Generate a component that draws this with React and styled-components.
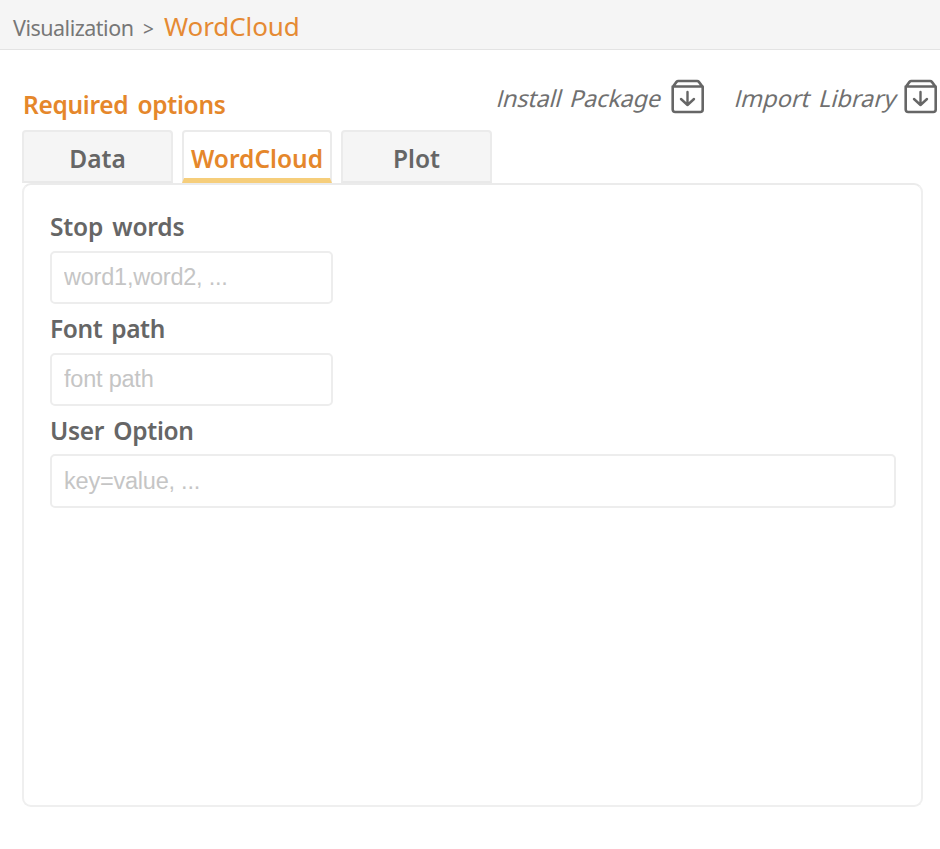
import React from 'react';
import styled, { createGlobalStyle } from 'styled-components';

const GlobalStyle = createGlobalStyle`
  *, *::before, *::after { box-sizing: border-box; }
  body { margin: 0; background: #fff; }
`;

const Page = styled.div`
  width: 940px;
  height: 849px;
  overflow: hidden;
  background: #fff;
  color: #5f5f5f;
  font-family: 'Noto Sans', 'Open Sans', sans-serif;
`;

const Header = styled.header`
  display: flex;
  align-items: baseline;
  height: 50px;
  padding: 2px 0 0 13px;
  background: #f5f5f5;
  border-bottom: 1px solid #e3e3e3;
  white-space: nowrap;
`;

const Crumb = styled.span`
  width: 130px;
  font-size: 21.5px;
  letter-spacing: -0.5px;
  color: #777;
`;

const Separator = styled.span`
  width: 21px;
  font-size: 19px;
  color: #777;
`;

const Current = styled.span`
  font-size: 26px;
  line-height: 48px;
  letter-spacing: -0.1px;
  color: #e58a33;
`;

const Toolbar = styled.div`
  display: flex;
  height: 80px;
  padding-left: 23px;
  white-space: nowrap;
`;

const Heading = styled.h1`
  flex: none;
  width: 474px;
  margin: 0;
  padding-top: 35px;
  font-size: 24.5px;
  line-height: 40px;
  font-weight: 600;
  letter-spacing: -0.3px;
  word-spacing: 3px;
  color: #e5872b;
`;

const Action = styled.button`
  display: flex;
  align-items: center;
  justify-content: space-between;
  width: ${(p) => p.$width}px;
  height: 35px;
  margin: 29px 30px 0 0;
  padding: 0;
  border: 0;
  background: none;
  color: #707070;
  font: 400 23.5px/36px 'Noto Sans', sans-serif;
  flex: none;
`;

const ActionText = styled.span`
  padding: 3px 0 0 1px;
  transform: skewX(-15deg);
  letter-spacing: ${(p) => p.$tracking}px;
  word-spacing: 3px;
  &::first-letter { font-family: 'Open Sans', sans-serif; }
`;

const Tabs = styled.nav`
  display: flex;
  gap: 9px;
  height: 53px;
  padding-left: 22px;
`;

const Tab = styled.button`
  width: ${(p) => (p.$active ? 150 : 151)}px;
  height: 53px;
  padding: ${(p) => (p.$active ? 3 : 0)}px 0 0;
  border: 2px solid #ebebeb;
  border-bottom: ${(p) => (p.$active ? '5px solid #f6ce7b' : '2px solid #e9e9e9')};
  border-radius: 4px 4px 0 0;
  background: ${(p) => (p.$active ? '#fff' : '#f5f5f5')};
  color: ${(p) => (p.$active ? '#e5872b' : '#666')};
  font: 600 24.5px/${(p) => (p.$active ? 48 : 54)}px 'Noto Sans', sans-serif;
  white-space: nowrap;
`;

const Panel = styled.main`
  display: flex;
  flex-direction: column;
  width: 901px;
  height: 624px;
  margin: 0 0 0 22px;
  padding: 24px 25px 0 26px;
  border: 2px solid #efefef;
  border-top-color: #ebebeb;
  border-radius: 9px;
`;

const Field = styled.label`
  display: flex;
  flex-direction: column;
  height: 102px;
`;

const FieldLabel = styled.span`
  height: ${(p) => p.$height || 42}px;
  font-size: 24.5px;
  font-weight: 600;
  line-height: 36px;
  letter-spacing: ${(p) => p.$tracking || 0}px;
  word-spacing: 3px;
  color: #666;
`;

const TextInput = styled.input`
  width: ${(p) => (p.$wide ? '846px' : '283px')};
  height: ${(p) => (p.$wide ? 54 : 53)}px;
  padding: 0 12px;
  border: 2px solid #ededed;
  border-radius: 5px;
  outline: none;
  background: #fff;
  color: #666;
  font: 23.5px 'Liberation Sans', Arial, sans-serif;
  letter-spacing: -0.22px;
  &::placeholder { color: #c5c5c5; opacity: 1; }
`;

const Icon = styled.svg`
  width: 34px;
  height: 35px;
  flex: none;
`;

function PackageIcon() {
  return (
    <Icon viewBox="0 0 34 35" fill="none" stroke="#666" strokeLinecap="round" strokeLinejoin="round">
      <path d="M1.7 8 L5.5 2.9 Q6.2 2 7.3 2 H26.1 Q27.2 2 27.9 2.9 L31.7 8 V30.5 Q31.7 33 29.2 33 H4.2 Q1.7 33 1.7 30.5 Z M1.7 7.5 H31.7" strokeWidth="2.6" />
      <path d="M16.5 13 V26 M10 20 L16.5 26 L23 20" strokeWidth="2.4" />
    </Icon>
  );
}

export default function App() {
  return (
    <>
      <GlobalStyle />
      <Page>
        <Header>
          <Crumb>Visualization</Crumb>
          <Separator>&gt;</Separator>
          <Current>WordCloud</Current>
        </Header>
        <Toolbar>
          <Heading>Required options</Heading>
          <Action $width={208}><ActionText $tracking={-0.2}>Install Package</ActionText><PackageIcon /></Action>
          <Action $width={203}><ActionText $tracking={0}>Import Library</ActionText><PackageIcon /></Action>
        </Toolbar>
        <Tabs>
          <Tab>Data</Tab>
          <Tab $active>WordCloud</Tab>
          <Tab>Plot</Tab>
        </Tabs>
        <Panel>
          <Field>
            <FieldLabel $tracking={-0.2}>Stop words</FieldLabel>
            <TextInput placeholder="word1,word2, ..." />
          </Field>
          <Field>
            <FieldLabel $tracking={-0.4}>Font path</FieldLabel>
            <TextInput placeholder="font path" />
          </Field>
          <Field>
            <FieldLabel $height={41} $tracking={-0.3}>User Option</FieldLabel>
            <TextInput $wide placeholder="key=value, ..." />
          </Field>
        </Panel>
      </Page>
    </>
  );
}
